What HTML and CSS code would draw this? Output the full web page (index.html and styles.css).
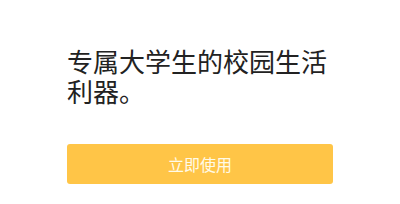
FILE: index.html
```html
<!DOCTYPE html>
<html lang="zh-CN">
<head>
    <meta charset="UTF-8">
    <meta name="viewport" content="width=device-width, initial-scale=1.0">
    <title>校园生活</title>
    <link rel="stylesheet" href="styles.css">
</head>
<body>
    <div class="intro">
        <h1 class="intro-title">专属大学生的校园生活利器。</h1>
        <button class="button">立即使用</button>
    </div>
</body>
</html>
```

FILE: styles.css
```css
/* General Body Styling */
body {
    font-family: "Noto Sans CJK SC", "Noto Sans", sans-serif;
    background: #ffffff;
    color: #222222;
    margin: 0;
    padding: 0;
}

/* Intro Block */
.intro {
    width: 266px;
    margin: 0 auto;
    padding-top: 46px;
    display: flex;
    flex-direction: column;
}

.intro-title {
    margin: 0;
    font-size: 26px;
    line-height: 30px;
    font-weight: 400;
    color: #222222;
}

/* Action Button */
.button {
    margin-top: 38px;
    height: 40px;
    padding: 0;
    font-family: inherit;
    font-size: 16px;
    color: #fffbe9;
    background: #ffc547;
    border: none;
    border-radius: 3px;
    cursor: pointer;
}
```
